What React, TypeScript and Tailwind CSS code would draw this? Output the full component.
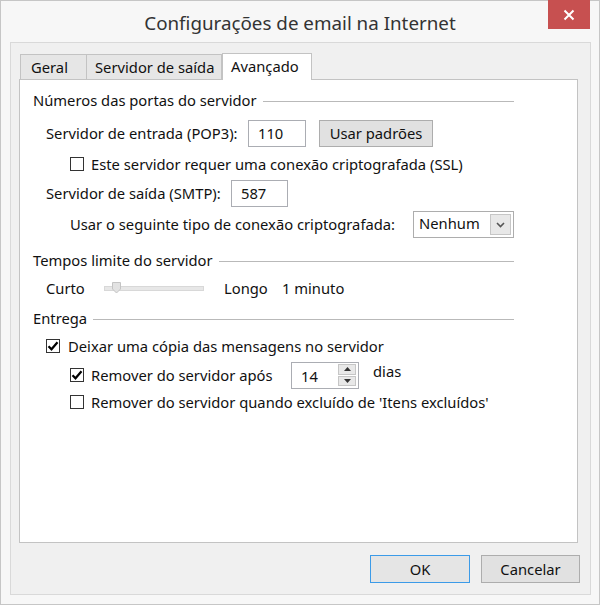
import React from 'react';

const font = { fontFamily: '"Noto Sans", "Open Sans", sans-serif' };

const GroupHeader: React.FC<{ title: string; className?: string }> = ({ title, className }) => (
  <div className={`flex items-center h-[20px] pl-[13px] pr-[63px] ${className ?? ''}`}>
    <span>{title}</span>
    <div className="flex-1 h-px bg-[#b9b9b9] ml-[6px] mt-[2px]" />
  </div>
);

const Check: React.FC<{ checked?: boolean }> = ({ checked }) => (
  <div className="w-[14px] h-[14px] border border-[#333] bg-white flex items-center justify-center shrink-0">
    {checked && (
      <svg width="12" height="12" viewBox="0 0 12 12">
        <path d="M1.5 6.2 L4.5 9.3 L10.5 2.2" fill="none" stroke="#000" strokeWidth="2.2" />
      </svg>
    )}
  </div>
);

const TextBox: React.FC<{ value: string; width: string }> = ({ value, width }) => (
  <div className={`${width} h-[27px] border border-[#abadb3] bg-white flex items-center pl-[9px]`}>{value}</div>
);

const App: React.FC = () => {
  return (
    <div className="w-[600px] h-[605px] bg-[#f7f7f7] border border-[#c6c6c6] flex flex-col text-[14.75px] text-[#111] whitespace-nowrap" style={font}>
      {/* title bar */}
      <div className="h-[41px] flex items-start relative">
        <div className="flex-1 text-center text-[18.8px] text-[#333] pt-[8px]">Configurações de email na Internet</div>
        <div className="absolute right-[9px] top-[-1px] w-[42px] h-[29px] bg-[#c75050] flex items-center justify-center">
          <svg width="12" height="12" viewBox="0 0 12 12">
            <path d="M1.5 1.5 L10.5 10.5 M10.5 1.5 L1.5 10.5" stroke="#fff" strokeWidth="2" />
          </svg>
        </div>
      </div>

      {/* client area */}
      <div className="ml-[9px] mr-[8px] h-[553px] border border-[#d9d9d9] bg-[#f0f0f0] flex flex-col">
        {/* tabs */}
        <div className="flex items-end h-[36px] pl-[9px] pt-[10px]">
          <div className="h-[25px] pl-[10px] border border-b-0 border-[#c3c3c3] bg-[#e6e6e6] flex items-center w-[67px]">Geral</div>
          <div className="h-[25px] pl-[8px] border border-b-0 border-l-0 border-[#c3c3c3] bg-[#e6e6e6] flex items-center w-[135px]">Servidor de saída</div>
          <div className="h-[27px] pl-[8px] border border-b-0 border-[#c3c3c3] bg-white flex items-center w-[90px] -mb-px relative z-10 pb-[2px]">Avançado</div>
        </div>

        {/* panel */}
        <div className="ml-[8px] w-[559px] h-[464px] border border-[#c3c3c3] bg-white flex flex-col">
          <GroupHeader title="Números das portas do servidor" className="mt-[10px]" />

          <div className="flex items-center h-[27px] mt-[10px] pl-[26px]">
            <span className="w-[202px]">Servidor de entrada (POP3):</span>
            <TextBox value="110" width="w-[58px]" />
            <div className="ml-[13px] w-[114px] h-[27px] border border-[#adadad] bg-[#e1e1e1] flex items-center justify-center">Usar padrões</div>
          </div>

          <div className="flex items-center h-[18px] mt-[8px] pl-[50px] gap-[7px]">
            <Check />
            <span>Este servidor requer uma conexão criptografada (SSL)</span>
          </div>

          <div className="flex items-center h-[26px] mt-[7px] pl-[26px]">
            <span className="w-[185px]">Servidor de saída (SMTP):</span>
            <TextBox value="587" width="w-[57px]" />
          </div>

          <div className="flex items-center h-[27px] mt-[5px] pl-[50px]">
            <span className="w-[343px]">Usar o seguinte tipo de conexão criptografada:</span>
            <div className="w-[101px] h-[27px] border border-[#adadad] bg-white flex items-center pl-[5px] pr-[2px]">
              <span className="flex-1 -mt-[2px]">Nenhum</span>
              <div className="w-[21px] h-[21px] border border-[#c6c6c6] bg-[#e8e8e8] flex items-center justify-center">
                <svg width="9" height="6" viewBox="0 0 9 6">
                  <path d="M1 1 L4.5 4.5 L8 1" fill="none" stroke="#555" strokeWidth="1.6" />
                </svg>
              </div>
            </div>
          </div>

          <GroupHeader title="Tempos limite do servidor" className="mt-[12px]" />

          <div className="flex items-center h-[20px] mt-[8px] pl-[26px]">
            <span className="w-[58px]">Curto</span>
            <div className="w-[100px] h-[20px] relative flex items-center">
              <div className="w-full h-[5px] bg-[#e7e7e7] border border-[#d8d8d8]" />
              <svg className="absolute left-[8px] top-[4px]" width="9" height="12" viewBox="0 0 9 12">
                <path d="M0.5 0.5 H8.5 V7 L4.5 11 L0.5 7 Z" fill="#e2e2e2" stroke="#c4c4c4" />
              </svg>
            </div>
            <span className="ml-[20px] w-[58px]">Longo</span>
            <span>1 minuto</span>
          </div>

          <GroupHeader title="Entrega" className="mt-[10px]" />

          <div className="flex items-center h-[18px] mt-[9px] pl-[26px] gap-[8px]">
            <Check checked />
            <span>Deixar uma cópia das mensagens no servidor</span>
          </div>

          <div className="flex items-center h-[26px] mt-[7px] pl-[50px]">
            <Check checked />
            <span className="ml-[7px] w-[200px]">Remover do servidor após</span>
            <div className="w-[68px] h-[27px] border border-[#abadb3] bg-white flex items-center pl-[9px] pr-[2px]">
              <span className="flex-1 mt-[2px]">14</span>
              <div className="w-[18px] h-[22px] flex flex-col gap-px">
                <div className="flex-1 bg-[#e8e8e8] border border-[#c6c6c6] flex items-center justify-center">
                  <svg width="7" height="4" viewBox="0 0 7 4"><path d="M0 4 L3.5 0 L7 4 Z" fill="#333" /></svg>
                </div>
                <div className="flex-1 bg-[#e8e8e8] border border-[#c6c6c6] flex items-center justify-center">
                  <svg width="7" height="4" viewBox="0 0 7 4"><path d="M0 0 L3.5 4 L7 0 Z" fill="#333" /></svg>
                </div>
              </div>
            </div>
            <span className="ml-[14px] -mt-[7px]">dias</span>
          </div>

          <div className="flex items-center h-[18px] mt-[5px] pl-[50px] gap-[7px]">
            <Check />
            <span>Remover do servidor quando excluído de 'Itens excluídos'</span>
          </div>
        </div>

        {/* buttons */}
        <div className="flex justify-end gap-[11px] mt-[12px] pr-[10px]">
          <div className="w-[100px] h-[28px] border border-[#3c9be8] bg-[#e5e5e5] flex items-center justify-center">OK</div>
          <div className="w-[99px] h-[28px] border border-[#adadad] bg-[#e1e1e1] flex items-center justify-center">Cancelar</div>
        </div>
      </div>
    </div>
  );
};

export default App;
